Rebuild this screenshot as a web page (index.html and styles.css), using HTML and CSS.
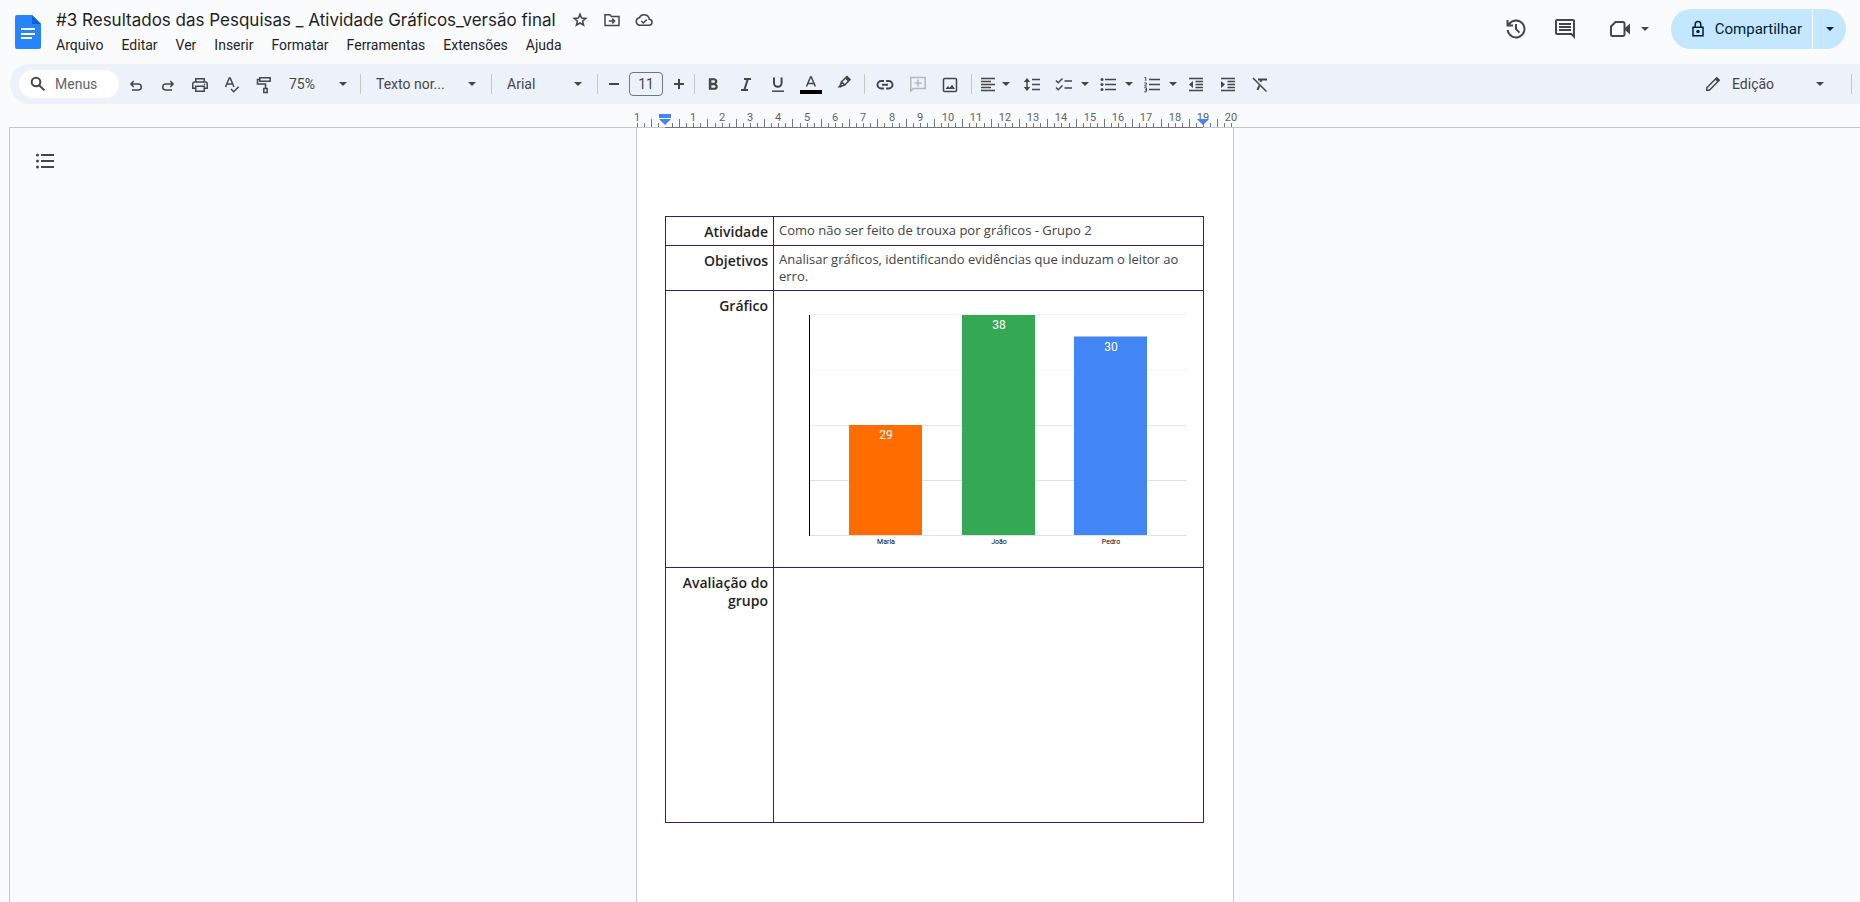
FILE: index.html
```html
<!DOCTYPE html>
<html lang="pt-BR">
<head>
<meta charset="utf-8">
<title>#3 Resultados das Pesquisas _ Atividade Gráficos_versão final</title>
<link rel="stylesheet" href="styles.css">
</head>
<body>
<svg class="defs" aria-hidden="true">
  <symbol id="caret" viewBox="0 0 10 5"><path class="fill" d="M0 0h10L5 5z"/></symbol>
</svg>

<header class="header">
  <a class="logo" href="#" aria-label="Documentos">
    <svg width="26" height="34" viewBox="0 0 26 34"><path fill="#2684fc" d="M2 0H17l9 9v23a2 2 0 0 1-2 2H2a2 2 0 0 1-2-2V2a2 2 0 0 1 2-2z"/><path fill="#0066da" d="M17 0l9 9h-9z"/><path fill="#fff" d="M6 13h14v2H6zM6 18h14v2H6zM6 22h11v2H6z"/></svg>
  </a>
  <div class="heading">
    <div class="title-row">
      <h1 class="title">#3 Resultados das Pesquisas _ Atividade Gráficos_versão final</h1>
      <button class="mini" aria-label="Marcar com estrela"><svg width="16" height="16" viewBox="0 0 16 16"><path d="M8 2.200l1.600 3.900 4.200.3-3.200 2.700 1 4.100L8 11l-3.600 2.200 1-4.100L2.200 6.400l4.200-.3z"/></svg></button>
      <button class="mini" aria-label="Mover"><svg width="18" height="16" viewBox="0 0 18 16"><path d="M2 2.800h4.800l1.600 1.700H16v9H2zM5.800 9h5.500M9.200 6.600L11.600 9l-2.400 2.400"/></svg></button>
      <button class="mini" aria-label="Status do documento"><svg width="20" height="16" viewBox="0 0 20 16"><path d="M5.500 13.200h9.300a3 3 0 0 0 .5-6A5.300 5.300 0 0 0 5.300 5.800a3.750 3.750 0 0 0 .2 7.400zM7.300 9l2 2 3.500-3.500"/></svg></button>
    </div>
    <nav class="menus">
      <button>Arquivo</button><button>Editar</button><button>Ver</button><button>Inserir</button><button>Formatar</button><button>Ferramentas</button><button>Extensões</button><button>Ajuda</button>
    </nav>
  </div>
  <div class="actions">
    <button class="round" aria-label="Histórico"><svg width="24" height="24" viewBox="0 0 24 24"><path class="fill" d="M12 21.500a9.300 9.300 0 0 1-9.400-8.500h2A7.500 7.500 0 1 0 6 7.500h3v2H2.500V3h2v3.100A9.500 9.500 0 1 1 12 21.500zm2.800-5.200L11 12.500V7h2v4.700l3.200 3.200z"/></svg></button>
    <button class="round" aria-label="Comentários"><svg width="24" height="24" viewBox="0 0 24 24"><path class="fill" d="M22 4c0-1.100-.9-2-2-2H4c-1.100 0-2 .9-2 2v12c0 1.100.9 2 2 2h14l4 4zM20 4v13.200L18.800 16H4V4h16zM6 12h12v2H6zm0-3h12v2H6zm0-3h12v2H6z"/></svg></button>
    <button class="meet" aria-label="Videochamada"><svg width="22" height="20" viewBox="0 0 22 20"><path class="thick" d="M6.500 3H14a1.500 1.500 0 0 1 1.500 1.500v11A1.500 1.500 0 0 1 14 17H3.500A1.500 1.500 0 0 1 2 15.500v-8z"/><path class="fill" d="M16 9l5-4.500v11L16 11z"/></svg><svg class="caret"><use href="#caret"/></svg></button>
    <div class="share">
      <button class="share-main"><svg width="14" height="18" viewBox="0 0 14 18"><path d="M2 7.200h10V15.800H2zM4.200 7V4.400a2.800 2.800 0 0 1 5.600 0V7"/><circle class="fill" cx="7" cy="11.500" r="1.700"/></svg>Compartilhar</button>
      <button class="share-more" aria-label="Opções de compartilhamento"><svg class="caret"><use href="#caret"/></svg></button>
    </div>
  </div>
</header>

<div class="toolbar" role="toolbar" aria-label="Principal">
  <label class="search"><svg width="16" height="16" viewBox="0 0 16 16"><circle class="thick" cx="6" cy="6" r="4.300"/><path class="thick" d="M9.200 9.200l5.200 5.200"/></svg><input type="text" value="Menus" aria-label="Menus"></label>
  <button class="tool" aria-label="Desfazer"><svg viewBox="0 0 20 20"><path d="M7.700 7L4.900 10l2.800 3M5 10h7.300a3 3 0 0 1 0 6H6"/></svg></button>
  <button class="tool" aria-label="Refazer"><svg viewBox="0 0 20 20"><path d="M12.300 7l2.800 3-2.800 3M15 10H7.700a3 3 0 0 0 0 6H14"/></svg></button>
  <button class="tool" aria-label="Imprimir"><svg viewBox="0 0 20 20"><path d="M5.800 8V4.800h8.400V8M5.500 14.300H2.800V9.800A1.800 1.800 0 0 1 4.600 8h10.800a1.800 1.800 0 0 1 1.800 1.800v4.500h-2.700M5.800 12.300h8.400v5H5.800z"/><circle class="fill" cx="14.500" cy="10.300" r=".8"/></svg></button>
  <button class="tool" aria-label="Verificar ortografia"><svg viewBox="0 0 20 20"><path d="M3.500 13L7.300 4h.9L12 13M5 10h5.500M9 15l2.700 2.700 5-5"/></svg></button>
  <button class="tool" aria-label="Pintar formatação"><svg viewBox="0 0 20 20"><path d="M5.800 3.800h10.400v3.400H5.800zM5.800 5.500H3.500V10h8v4.500M9.800 14.500h3.400v4H9.800z"/></svg></button>
  <span class="pick zoom"><select aria-label="Zoom"><option>75%</option></select><svg class="caret"><use href="#caret"/></svg></span>
  <span class="sep"></span>
  <span class="pick style"><select aria-label="Estilos"><option>Texto nor...</option></select><svg class="caret"><use href="#caret"/></svg></span>
  <span class="sep"></span>
  <span class="pick font"><select aria-label="Fonte"><option>Arial</option></select><svg class="caret"><use href="#caret"/></svg></span>
  <span class="sep"></span>
  <button class="step" aria-label="Diminuir tamanho"><svg viewBox="0 0 20 20"><path class="thick" d="M5 10h10"/></svg></button>
  <input class="size" type="text" value="11" aria-label="Tamanho da fonte">
  <button class="step" aria-label="Aumentar tamanho"><svg viewBox="0 0 20 20"><path class="thick" d="M5 10h10M10 5v10"/></svg></button>
  <span class="sep gap-right"></span>
  <button class="tool" aria-label="Negrito"><svg viewBox="0 0 24 24"><path class="fill" d="M15.600 11.800c1-.7 1.650-1.800 1.650-2.800 0-2.260-1.750-4-4-4H7v14h7c2.100 0 3.750-1.700 3.750-3.800 0-1.500-.86-2.800-2.150-3.400zM10 7.500h3a1.500 1.500 0 0 1 0 3h-3zm3.500 9H10v-3h3.500a1.500 1.500 0 0 1 0 3z"/></svg></button>
  <button class="tool wide" aria-label="Itálico"><svg viewBox="0 0 20 20"><path class="thick" d="M8 5h7M5 16h7M11.800 5L8.300 16"/></svg></button>
  <button class="tool" aria-label="Sublinhado"><svg viewBox="0 0 20 20"><path class="thick" d="M6 3.500V9a3.800 3.800 0 0 0 7.600 0V3.500"/><path d="M4 17.200h12"/></svg></button>
  <button class="tool wide" aria-label="Cor do texto"><svg class="big" viewBox="0 0 24 24"><path d="M7.500 14.500l4-9.500h.8l4 9.500M9 11.500h6"/><path fill="#000" d="M1 18h22v4H1z" stroke="none"/></svg></button>
  <button class="tool wide" aria-label="Cor de destaque"><svg viewBox="0 0 20 20"><path d="M7.500 7.700L13 2.500l3 3L10.800 11zM7.500 7.700l-1 3 1.300 1.300 3-1"/><path class="fill" d="M11 4.500l2.200-2.200 3.200 3.200-2.200 2.200zM3.500 13.500L6.500 10l2 2-1.500 1.500z"/></svg></button>
  <span class="sep gap"></span>
  <button class="tool" aria-label="Inserir link"><svg viewBox="0 0 20 20"><path class="thick" d="M9 7H6.200a3.700 3.700 0 0 0 0 7.400H9M11 7h2.800a3.700 3.700 0 0 1 0 7.400H11M7 10.700h6"/></svg></button>
  <button class="tool wide" aria-label="Adicionar comentário" disabled><svg viewBox="0 0 20 20"><path d="M2.800 17V3.500h14.400v11H5.300zM6.500 9h7M10 5.500v7"/></svg></button>
  <button class="tool" aria-label="Inserir imagem"><svg viewBox="0 0 20 20"><rect x="3.500" y="4.500" width="13" height="13" rx="1"/><path class="fill" d="M5.500 15L8 12l1.700 1.800 2.300-3 3 4.200z"/></svg></button>
  <span class="sep gap-left"></span>
  <button class="combo tight" aria-label="Alinhar"><svg viewBox="0 0 20 20"><path d="M3 4.500h14M3 7.500h10M3 10.500h14M3 13.500h10M3 16.500h14"/></svg><svg class="caret"><use href="#caret"/></svg></button>
  <button class="tool" aria-label="Espaçamento"><svg viewBox="0 0 20 20"><path d="M10 5.500h8M10 10.500h8M10 15.500h8M5 6v9"/><path class="fill" d="M1.800 8L5 4l3.200 4zM1.800 13L5 17l3.200-4z"/></svg></button>
  <button class="combo" aria-label="Lista de verificação"><svg viewBox="0 0 20 20"><path d="M2 6.500l2.200 2.200L8.500 4.500M2 13.500l2.200 2.200 4.300-4.200M10.500 7h7.500M10.500 14h7.500"/></svg><svg class="caret"><use href="#caret"/></svg></button>
  <button class="combo" aria-label="Lista com marcadores"><svg viewBox="0 0 20 20"><path d="M7 5.500h11M7 10.500h11M7 15.500h11"/><circle class="fill" cx="4" cy="5.500" r="1.500"/><circle class="fill" cx="4" cy="10.500" r="1.500"/><circle class="fill" cx="4" cy="15.500" r="1.500"/></svg><svg class="caret"><use href="#caret"/></svg></button>
  <button class="combo" aria-label="Lista numerada"><svg viewBox="0 0 20 20"><path d="M7 5.500h11M7 10.500h11M7 15.500h11"/><path class="thin" d="M2.500 3.500h1.300v3.500M2.200 9h2.300v1L2.500 12h2.300M2.200 13.800h2.300v4H2.200M3 15.800h1.500"/></svg><svg class="caret"><use href="#caret"/></svg></button>
  <button class="tool" aria-label="Diminuir recuo"><svg viewBox="0 0 20 20"><path d="M3 4.500h14M9.500 7.500H17M9.500 10.500H17M9.500 13.500H17M3 16.500h14"/><path class="fill" d="M7 7v7l-4-3.500z"/></svg></button>
  <button class="tool" aria-label="Aumentar recuo"><svg viewBox="0 0 20 20"><path d="M3 4.500h14M9.500 7.500H17M9.500 10.500H17M9.500 13.500H17M3 16.500h14"/><path class="fill" d="M3 7v7l4-3.500z"/></svg></button>
  <button class="tool" aria-label="Limpar formatação"><svg viewBox="0 0 20 20"><path class="thick" d="M8 5.500h9M11.500 5.500L10.600 8M9.300 11.500L7.500 16"/><path d="M3 4l13.500 13.500"/></svg></button>
  <span class="pick mode"><svg class="pencil" viewBox="0 0 20 20"><path d="M3.800 16.200v-2.500L13.700 3.800l2.500 2.500-9.900 9.900z"/><path class="fill" d="M12 5.500l2-2.300 2.800 2.800-2.300 2z"/></svg><select aria-label="Modo"><option>Edição</option></select><svg class="caret"><use href="#caret"/></svg></span>
  <span class="sep"></span>
</div>

<main class="workspace">
  <div class="ruler"><svg id="ruler" height="24" role="img" aria-label="Régua"></svg></div>
  <div class="canvas">
    <aside class="outline"><button aria-label="Mostrar estrutura"><svg width="20" height="20" viewBox="0 0 20 20"><path class="thick" d="M6 5h13M6 11h13M6 17h13"/><circle class="fill" cx="2.500" cy="5" r="1.500"/><circle class="fill" cx="2.500" cy="11" r="1.500"/><circle class="fill" cx="2.500" cy="17" r="1.500"/></svg></button></aside>
    <article class="page">
      <table class="sheet">
        <tr><th scope="row">Atividade</th><td>Como não ser feito de trouxa por gráficos - Grupo 2</td></tr>
        <tr><th scope="row">Objetivos</th><td>Analisar gráficos, identificando evidências que induzam o leitor ao erro.</td></tr>
        <tr class="row-chart"><th scope="row">Gráfico</th><td>
          <svg class="chart" viewBox="0 0 420 260" role="img" aria-label="Maria 29, João 38, Pedro 30">
            <g><path stroke="#f3f3f3" d="M31 15.500h378"/><path stroke="#f6f6f6" d="M31 71.500h378"/><path stroke="#ebebeb" d="M31 126.500h378"/><path stroke="#e2e2e2" d="M31 181.500h378M31 236.500h378"/></g>
            <path class="axis" d="M31.500 16v221"/>
            <path fill="#ff6d01" d="M71 126h73v110H71z"/>
            <path fill="#34a853" d="M184 16h73v220h-73z"/>
            <path fill="#4285f4" d="M296 37.500h73V236h-73z"/>
            <g class="values"><text x="108" y="140">29</text><text x="221" y="30">38</text><text x="333" y="52">30</text></g>
            <g class="names"><text x="108" y="245">Maria</text><text x="221" y="245">João</text><text x="333" y="245">Pedro</text></g>
          </svg>
        </td></tr>
        <tr class="row-review"><th scope="row">Avaliação do grupo</th><td></td></tr>
      </table>
    </article>
  </div>
</main>
<script src="ruler.js"></script>
</body>
</html>
```
FILE: styles.css
```css
* { box-sizing: border-box; }
body {
  margin: 0;
  height: 100vh;
  display: flex;
  flex-direction: column;
  overflow: hidden;
  background: #fafbfd;
  color: #1f1f1f;
  font-family: Roboto, "Liberation Sans", sans-serif;
  font-size: 14px;
}
.defs { display: none; }
button, select, input { font: inherit; color: inherit; border: 0; padding: 0; margin: 0; background: none; }
button { display: inline-flex; align-items: center; justify-content: center; cursor: pointer; }
svg { display: block; fill: none; stroke: currentColor; stroke-width: 1.5; flex: none; }
.thick { stroke-width: 2; }
.thin { stroke-width: 1; }
.fill { fill: currentColor; stroke: none; }
.caret { width: 8px; height: 4px; }

.header { display: flex; align-items: flex-start; height: 64px; padding: 0 14px 0 15px; }
.logo { margin-top: 15px; }
.logo svg { stroke: none; }
.heading { margin: 8px 0 0 15px; }
.title-row { display: flex; align-items: center; height: 24px; }
.title { margin: 0 14px 0 0; font-family: Inter, sans-serif; font-weight: 400; font-size: 17px; line-height: 24px; white-space: nowrap; }
.mini { width: 20px; height: 24px; margin-right: 12px; color: #444746; }
.menus { display: flex; gap: 18px; height: 26px; align-items: center; }
.actions { display: flex; align-items: center; margin: 9px 0 0 auto; height: 40px; color: #444746; }
.round { width: 40px; height: 40px; margin-right: 9px; }
.meet { gap: 10px; margin: 0 22px 0 15px; }
.share { display: flex; gap: 1px; height: 40px; color: #001d35; }
.share-main { gap: 10px; padding: 0 10px 0 20px; border-radius: 20px 0 0 20px; background: #c2e7ff; font-size: 15px; }
.share-more { width: 33px; border-radius: 0 20px 20px 0; background: #c2e7ff; }

.toolbar { display: flex; align-items: center; height: 40px; flex: none; margin-left: 10px; padding: 0 8px 0 9px; border-radius: 20px 0 0 20px; background: #edf1fa; color: #444746; }
.search { display: flex; align-items: center; gap: 9px; width: 100px; height: 28px; margin-right: 1px; padding-left: 11px; border-radius: 14px; background: #fff; }
.search input { width: 56px; color: #5f6368; }
.tool { width: 32px; height: 32px; }
.tool svg, .step svg, .combo svg:first-child, .pencil { width: 20px; height: 20px; }
.wide { width: 33px; }
.wide svg.big { width: 24px; height: 24px; }
.tool:disabled { color: #b4b7bb; }
.step { width: 31px; height: 32px; }
.size { width: 34px; height: 24px; border: 1px solid #747775; border-radius: 4px; text-align: center; }
.combo { width: 44px; height: 32px; justify-content: flex-start; padding-left: 6px; gap: 7px; }
.tight { gap: 4px; }
.sep { width: 1px; height: 20px; background: #c7c7c7; }
.gap { margin: 0 4px; }
.gap-left { margin-left: 5px; }
.gap-right { margin-right: 2px; }
.pick { display: flex; align-items: center; justify-content: space-between; height: 32px; }
.pick select { appearance: none; flex: 1; outline: 0; }
.zoom { width: 80px; padding: 0 13px 0 9px; }
.style { width: 130px; padding: 0 15px 0 15px; }
.font { width: 105px; padding: 0 15px 0 15px; }
.mode { width: 148px; margin-left: auto; gap: 9px; padding: 0 27px 0 0; }

.workspace { flex: 1; display: flex; flex-direction: column; min-height: 0; }
.ruler { display: flex; justify-content: center; height: 24px; margin-left: 9px; border-bottom: 1px solid #c4c7c5; }
#ruler { width: 615px; stroke: none; overflow: visible; }
#ruler text { fill: #5f6368; font-size: 11px; text-anchor: middle; }
#ruler .tick { fill: #747775; }
#ruler .marker { fill: #4285f4; }
.canvas { flex: 1; position: relative; display: flex; justify-content: center; align-items: stretch; margin-left: 9px; border-left: 1px solid #c4c7c5; min-height: 0; }
.outline { position: absolute; left: 25px; top: 22px; color: #444746; }
.page { width: 598px; background: #fff; border: solid #c4c7c5; border-width: 0 1px; padding: 88px 28px 0; }
.sheet { width: 539px; border-collapse: collapse; table-layout: fixed; font-family: "Open Sans", sans-serif; font-size: 13px; line-height: 17px; }
.sheet th, .sheet td { border: 1px solid #351c75; padding: 5px; vertical-align: top; text-align: left; }
.sheet th { width: 108px; padding: 6px 5px 4px; text-align: right; font-size: 14px; font-weight: 600; line-height: 18px; color: #1f1f1f; }
.sheet td { color: #434343; }
.sheet .row-chart td { padding: 8px 0 8px 4px; }
.row-review { height: 255px; }
.chart { width: 420px; stroke: none; stroke-width: 1; }
.chart .axis { stroke: #000; }
.values { fill: #fff; font: 12px Roboto, sans-serif; text-anchor: middle; }
.names { fill: #000; font: 7px Roboto, sans-serif; text-anchor: middle; }
```
FILE: ruler.js
```js
const svg = document.getElementById("ruler");
const origin = 38;
const end = 576;
const step = (end - origin) / 19;
let parts = "";
for (let q = -4; q <= 80; q++) {
  if (q === 0) continue;
  const x = Math.round(origin + (q * step) / 4);
  const tall = Math.abs(q % 4) === 2;
  parts += `<rect class="tick" x="${x}" y="${tall ? 15 : 19}" width="1" height="${tall ? 8 : 4}"/>`;
  if (q % 4 === 0) parts += `<text x="${x}" y="17">${Math.abs(q / 4)}</text>`;
}
parts += `<rect class="tick" x="${origin}" y="23" width="${end - origin}" height="1"/>`;
parts += `<path class="marker" d="M${origin - 6} 10h12v4h-12zM${origin - 6} 15h12l-6 6zM${end - 6} 15h12l-6 6z"/>`;
svg.innerHTML = parts;
```
